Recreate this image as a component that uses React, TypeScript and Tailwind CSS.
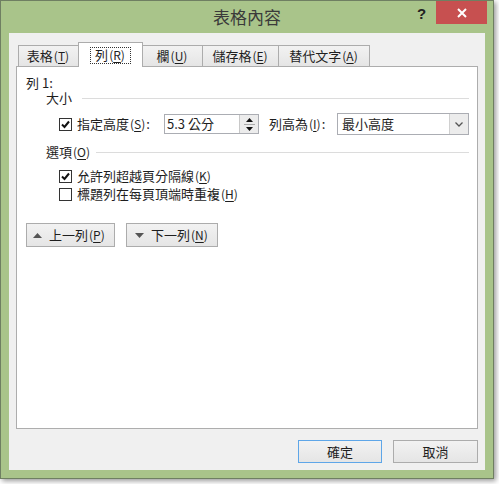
import React from 'react';

const FONT = '"Noto Sans CJK TC", "Liberation Sans", sans-serif';

function Key({ k }: { k: string }) {
  return (
    <span className="text-[12px] mx-[1px]">
      (<span className="underline underline-offset-2">{k}</span>)
    </span>
  );
}

function Check({ checked }: { checked?: boolean }) {
  return (
    <span className="w-[13px] h-[13px] border border-[#333333] bg-white flex items-center justify-center shrink-0">
      {checked && (
        <svg width="9" height="9" viewBox="0 0 9 9">
          <path d="M1 4.5 L3.5 7 L8 1.5" stroke="#111" strokeWidth="2" fill="none" />
        </svg>
      )}
    </span>
  );
}

function Section({ label, gap }: { label: React.ReactNode; gap: string }) {
  return (
    <div className={`flex items-center h-[16px] ml-[20px] ${gap}`}>
      <span className="text-[#1e1e1e]">{label}</span>
      <div className="flex-1 h-px bg-[#dcdcdc]" />
    </div>
  );
}

export default function App() {
  const tabs = [
    { label: '表格', key: 'T', w: 'w-[61px]' },
    { label: '列', key: 'R', w: 'w-[65px]', active: true },
    { label: '欄', key: 'U', w: 'w-[61px]' },
    { label: '儲存格', key: 'E', w: 'w-[77px]' },
    { label: '替代文字', key: 'A', w: 'w-[92px]' },
  ];

  return (
    <div className="w-[499px] h-[484px] bg-white text-[13px] leading-[16px] text-[#1e1e1e]" style={{ fontFamily: FONT }}>
      <div className="relative w-[494px] h-[479px] bg-[#a9c48a] border border-[#6f7f62] shadow-[2px_2px_5px_rgba(0,0,0,0.4)] flex flex-col">
        {/* title bar */}
        <div className="h-[32px] flex items-center justify-center text-[17px] text-[#3a3a3a]">表格內容</div>
        <span className="absolute left-[416px] top-[5px] text-[15px] font-bold text-[#222]" style={{ fontFamily: '"Liberation Sans", sans-serif' }}>?</span>
        <div className="absolute top-0 right-[6px] w-[51px] h-[23px] bg-[#c75050] flex items-center justify-center">
          <svg width="10" height="10" viewBox="0 0 10 10">
            <path d="M1 1 L9 9 M9 1 L1 9" stroke="#fff" strokeWidth="2" />
          </svg>
        </div>

        {/* client area */}
        <div className="mx-[8px] h-[437px] bg-[#f0f0f0] flex flex-col pt-[9px] px-[7px]">
          <div className="h-[24px] flex items-end pl-[2px]">
            {tabs.map((t) =>
              t.active ? (
                <div key={t.label} className={`${t.w} relative z-10 -ml-px h-[25px] -mb-px bg-white border border-b-0 border-[#acacac] flex items-center justify-center`}>
                  <span className="border border-dotted border-[#333] px-[4px] h-[17px] flex items-center">
                    {t.label}
                    <Key k={t.key} />
                  </span>
                </div>
              ) : (
                <div key={t.label} className={`${t.w} -ml-px first:ml-0 h-[21px] bg-gradient-to-b from-[#f2f2f2] to-[#e5e5e5] border border-b-0 border-[#acacac] flex items-center justify-center`}>
                  {t.label}
                  <Key k={t.key} />
                </div>
              )
            )}
          </div>

          {/* tab panel */}
          <div className="h-[363px] bg-white border border-[#adadad] pt-[8px] pl-[9px] pr-[8px]">
            <div className="h-[15px] flex items-center">列 1:</div>
            <Section label="大小" gap="gap-[10px]" />

            <div className="mt-[7px] h-[22px] flex items-center ml-[33px]">
              <Check checked />
              <span className="ml-[5px] w-[87px] whitespace-nowrap">
                指定高度<Key k="S" />:
              </span>
              <div className="w-[95px] h-[20px] border border-[#abadb3] bg-white flex items-center">
                <span className="flex-1 pl-[2px]">5.3 公分</span>
                <div className="w-[19px] h-full border-l border-[#c8c8c8] bg-[#ececec] flex flex-col items-center justify-center gap-[2px]">
                  <svg width="7" height="4" viewBox="0 0 7 4"><path d="M0 4 L3.5 0 L7 4 Z" fill="#111" /></svg>
                  <div className="w-[11px] h-px bg-[#aaa]" />
                  <svg width="7" height="4" viewBox="0 0 7 4"><path d="M0 0 L3.5 4 L7 0 Z" fill="#111" /></svg>
                </div>
              </div>
              <span className="ml-[10px] w-[68px] whitespace-nowrap">
                列高為<Key k="I" />:
              </span>
              <div className="w-[132px] h-[22px] border border-[#abadb3] bg-white flex items-center">
                <span className="flex-1 pl-[4px]">最小高度</span>
                <div className="w-[19px] h-full border-l border-[#d0d0d0] bg-[#ececec] flex items-center justify-center">
                  <svg width="8" height="5" viewBox="0 0 8 5"><path d="M0.5 0.5 L4 4 L7.5 0.5" stroke="#555" strokeWidth="1.3" fill="none" /></svg>
                </div>
              </div>
            </div>

            <div className="mt-[9px]">
              <Section label={<>選項<Key k="O" /></>} gap="gap-[5px]" />
            </div>

            <div className="mt-[8px] h-[16px] flex items-center ml-[33px] gap-[5px]">
              <Check checked />
              <span>允許列超越頁分隔線<Key k="K" /></span>
            </div>
            <div className="mt-[2px] h-[16px] flex items-center ml-[33px] gap-[5px]">
              <Check />
              <span>標題列在每頁頂端時重複<Key k="H" /></span>
            </div>

            <div className="mt-[21px] flex gap-[11px]">
              <button className="w-[89px] h-[24px] border border-[#acacac] bg-gradient-to-b from-[#f2f2f2] to-[#e5e5e5] flex items-center pl-[6px] gap-[7px]">
                <svg width="9" height="5" viewBox="0 0 9 5"><path d="M0 5 L4.5 0 L9 5 Z" fill="#555" /></svg>
                <span>上一列<Key k="P" /></span>
              </button>
              <button className="w-[92px] h-[24px] border border-[#acacac] bg-gradient-to-b from-[#f2f2f2] to-[#e5e5e5] flex items-center pl-[8px] gap-[7px]">
                <svg width="9" height="5" viewBox="0 0 9 5"><path d="M0 0 L4.5 5 L9 0 Z" fill="#555" /></svg>
                <span>下一列<Key k="N" /></span>
              </button>
            </div>
          </div>

          {/* dialog buttons */}
          <div className="mt-[11px] flex justify-end gap-[11px]">
            <button className="w-[84px] h-[23px] border border-[#5ea6e8] bg-gradient-to-b from-[#f2f2f2] to-[#e5e5e5] flex items-center justify-center">確定</button>
            <button className="w-[85px] h-[23px] border border-[#acacac] bg-gradient-to-b from-[#f2f2f2] to-[#e5e5e5] flex items-center justify-center">取消</button>
          </div>
        </div>
      </div>
    </div>
  );
}
